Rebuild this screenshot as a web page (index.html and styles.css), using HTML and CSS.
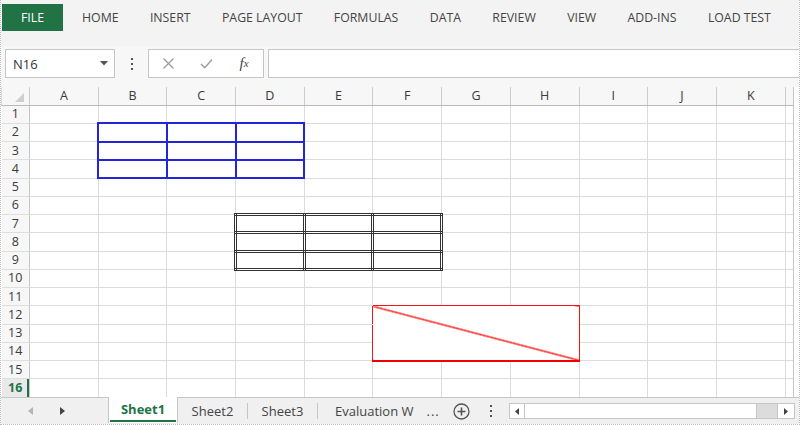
FILE: index.html
```html
<!DOCTYPE html>
<html>
<head>
<meta charset="utf-8">
<link rel="stylesheet" href="styles.css">
</head>
<body>
<div class="app">
  <div class="ribbon">
    <div class="tabs">
      <span class="file">FILE</span>
      <span class="tab">HOME</span>
      <span class="tab">INSERT</span>
      <span class="tab">PAGE LAYOUT</span>
      <span class="tab">FORMULAS</span>
      <span class="tab">DATA</span>
      <span class="tab">REVIEW</span>
      <span class="tab">VIEW</span>
      <span class="tab">ADD-INS</span>
      <span class="tab">LOAD TEST</span>
    </div>
  </div>
  <div class="fbar">
    <div class="namebox">
      <span class="ref">N16</span>
      <svg class="caret" width="8" height="5" viewBox="0 0 8 5"><path d="M0 0H8L4 4.5Z" fill="#555"/></svg>
    </div>
    <div class="vdots"><i></i><i></i><i></i></div>
    <div class="btns">
      <span class="btn"><svg width="11" height="11" viewBox="0 0 11 11"><path d="M0.5 0.5L10.5 10.5M10.5 0.5L0.5 10.5" stroke="#9a9a9a" stroke-width="1.2" fill="none"/></svg></span>
      <span class="btn"><svg width="13" height="11" viewBox="0 0 13 11"><path d="M1 6L4.8 9.8L12 1.5" stroke="#9a9a9a" stroke-width="1.4" fill="none"/></svg></span>
      <span class="btn fx">f<span class="fxs">x</span></span>
    </div>
    <div class="finput"></div>
  </div>
  <div class="sheetwrap">
    <table class="sheet">
      <colgroup>
        <col class="c0"><col class="cc"><col class="cc"><col class="cc"><col class="cc"><col class="cc"><col class="cc"><col class="cc"><col class="cc"><col class="cc"><col class="cc"><col class="cc"><col class="ce">
      </colgroup>
      <thead>
        <tr><th class="corner"><svg class="tri" width="9" height="9" viewBox="0 0 9 9"><path d="M9 0V9H0Z" fill="#cfcfcf"/></svg></th><th>A</th><th>B</th><th>C</th><th>D</th><th>E</th><th>F</th><th>G</th><th>H</th><th>I</th><th>J</th><th>K</th><th></th></tr>
      </thead>
      <tbody>
        <tr><th>1</th><td></td><td></td><td></td><td></td><td></td><td></td><td></td><td></td><td></td><td></td><td></td><td></td></tr>
        <tr><th>2</th><td></td><td class="b"></td><td class="b"></td><td class="b"></td><td></td><td></td><td></td><td></td><td></td><td></td><td></td><td></td></tr>
        <tr><th>3</th><td></td><td class="b"></td><td class="b"></td><td class="b"></td><td></td><td></td><td></td><td></td><td></td><td></td><td></td><td></td></tr>
        <tr><th>4</th><td></td><td class="b"></td><td class="b"></td><td class="b"></td><td></td><td></td><td></td><td></td><td></td><td></td><td></td><td></td></tr>
        <tr><th>5</th><td></td><td></td><td></td><td></td><td></td><td></td><td></td><td></td><td></td><td></td><td></td><td></td></tr>
        <tr><th>6</th><td></td><td></td><td></td><td></td><td></td><td></td><td></td><td></td><td></td><td></td><td></td><td></td></tr>
        <tr><th>7</th><td></td><td></td><td></td><td class="k"></td><td class="k"></td><td class="k"></td><td></td><td></td><td></td><td></td><td></td><td></td></tr>
        <tr><th>8</th><td></td><td></td><td></td><td class="k"></td><td class="k"></td><td class="k"></td><td></td><td></td><td></td><td></td><td></td><td></td></tr>
        <tr><th>9</th><td></td><td></td><td></td><td class="k"></td><td class="k"></td><td class="k"></td><td></td><td></td><td></td><td></td><td></td><td></td></tr>
        <tr><th>10</th><td></td><td></td><td></td><td></td><td></td><td></td><td></td><td></td><td></td><td></td><td></td><td></td></tr>
        <tr><th>11</th><td></td><td></td><td></td><td></td><td></td><td class="rt"></td><td class="rt"></td><td class="rt"></td><td></td><td></td><td></td><td></td></tr>
        <tr><th>12</th><td></td><td></td><td></td><td></td><td class="rl"></td><td class="r" colspan="3" rowspan="3"></td><td></td><td></td><td></td><td></td></tr>
        <tr><th>13</th><td></td><td></td><td></td><td></td><td class="rl"></td><td></td><td></td><td></td><td></td></tr>
        <tr><th>14</th><td></td><td></td><td></td><td></td><td class="rl"></td><td></td><td></td><td></td><td></td></tr>
        <tr><th>15</th><td></td><td></td><td></td><td></td><td></td><td></td><td></td><td></td><td></td><td></td><td></td><td></td></tr>
        <tr><th class="sel">16</th><td></td><td></td><td></td><td></td><td></td><td></td><td></td><td></td><td></td><td></td><td></td><td></td></tr>
      </tbody>
    </table>
  </div>
  <div class="tabbar">
    <div class="nav">
      <svg width="5" height="8" viewBox="0 0 5 8"><path d="M5 0V8L0 4Z" fill="#b5b5b5"/></svg>
      <svg width="5" height="8" viewBox="0 0 5 8"><path d="M0 0V8L5 4Z" fill="#444"/></svg>
    </div>
    <div class="sheet1"><span class="lbl">Sheet1</span><span class="ul"></span></div>
    <div class="stab">Sheet2</div>
    <span class="sep"></span>
    <div class="stab">Sheet3</div>
    <span class="sep"></span>
    <div class="stab eval">Evaluation W<span class="dots">...</span></div>
    <div class="add"><svg width="17" height="17" viewBox="0 0 17 17"><circle cx="8.5" cy="8.5" r="7.5" fill="none" stroke="#555" stroke-width="1.3"/><path d="M8.5 4.5V12.5M4.5 8.5H12.5" stroke="#555" stroke-width="1.6"/></svg></div>
    <div class="vd2"><i></i><i></i><i></i></div>
    <div class="hscroll">
      <span class="sbtn"><svg width="4" height="7" viewBox="0 0 4 7"><path d="M4 0V7L0 3.5Z" fill="#444"/></svg></span>
      <span class="thumb"></span>
      <span class="track"></span>
      <span class="sbtn last"><svg width="4" height="7" viewBox="0 0 4 7"><path d="M0 0V7L4 3.5Z" fill="#444"/></svg></span>
    </div>
  </div>
</div>
</body>
</html>
```
FILE: styles.css
```css
* { box-sizing: border-box; }
html, body { margin: 0; padding: 0; background: #fff; }
body { font-family: "Open Sans", "Liberation Sans", sans-serif; }

.app {
  width: 800px;
  height: 425px;
  overflow: hidden;
  border-left: 1px dotted #bcbcbc;
  border-right: 1px dotted #bcbcbc;
  border-bottom: 1px dotted #bcbcbc;
  display: flex;
  flex-direction: column;
  background: #fff;
}

/* Ribbon */
.ribbon {
  height: 46px;
  flex: none;
  background: #f3f3f3;
  padding-top: 4px;
}
.tabs {
  display: flex;
  align-items: center;
  height: 27px;
  gap: 31.4px;
  font-size: 12.3px;
  color: #444;
  white-space: nowrap;
}
.file {
  width: 61px;
  height: 27px;
  margin-left: 1px;
  margin-right: -12.4px;
  background: #217346;
  color: #fff;
  display: flex;
  align-items: center;
  justify-content: center;
}

/* Formula bar */
.fbar {
  height: 41px;
  flex: none;
  background: #f7f7f7;
  display: flex;
  align-items: flex-start;
  padding-top: 3px;
}
.namebox {
  margin-left: 4px;
  width: 110px;
  height: 29px;
  border: 1px solid #c6c6c6;
  background: #fff;
  display: flex;
  align-items: center;
  justify-content: space-between;
  padding: 0 6px 0 7px;
}
.ref { font-size: 13px; color: #333; }
.caret { display: block; }
.vdots {
  width: 33px;
  height: 29px;
  display: flex;
  flex-direction: column;
  align-items: center;
  justify-content: center;
  gap: 3px;
}
.vdots i, .vd2 i {
  display: block;
  width: 2px;
  height: 2px;
  background: #555;
}
.btns {
  width: 116px;
  height: 29px;
  border: 1px solid #c6c6c6;
  background: #fff;
  display: flex;
  align-items: center;
}
.btn {
  width: 38px;
  display: flex;
  align-items: center;
  justify-content: center;
}
.fx {
  font-family: "Liberation Serif", serif;
  font-style: italic;
  font-size: 15px;
  color: #444;
  line-height: 1;
}
.fxs { font-size: 11px; }
.finput {
  flex: 1;
  height: 29px;
  margin-left: 4px;
  border: 1px solid #c6c6c6;
  border-right: none;
  background: #fff;
}

/* Sheet grid */
.sheetwrap {
  height: 310px;
  flex: none;
  overflow: hidden;
  margin-right: 5px;
  border-right: 1px solid #c6c6c6;
}
.sheet {
  border-collapse: collapse;
  table-layout: fixed;
  width: 792px;
}
.c0 { width: 28px; }
.cc { width: 68.7px; }
.ce { width: 8.3px; }
.sheet th, .sheet td {
  padding: 0;
  border: 1px solid #dcdcdc;
}
.sheet thead th {
  height: 18px;
  background: #f7f7f7;
  border-top: none;
  border-right: 1px solid #cdcdcd;
  border-bottom: 1px solid #b9b9b9;
  font-weight: normal;
  font-size: 12.5px;
  color: #3a3a3a;
  line-height: 17px;
  text-align: center;
}
.sheet thead th:last-child { border-right: none; }
.sheet .corner {
  text-align: right;
  vertical-align: bottom;
  padding: 0 5px 3px 0;
  line-height: 0;
}
.tri { display: inline-block; }
.sheet tbody tr { height: 18.25px; }
.sheet tbody th {
  background: #f7f7f7;
  border-left: none;
  border-right: 1px solid #c6c6c6;
  border-bottom: 1px solid #dedede;
  font-weight: normal;
  font-size: 12.5px;
  color: #3a3a3a;
  line-height: 16px;
  text-align: center;
}
.sheet tbody th.sel {
  color: #217346;
  font-weight: bold;
  background: #e9e9e9;
  box-shadow: inset -2px 0 0 #217346;
}
.sheet td:last-child { border-right: none; }
.sheet td.b { border: 2px solid #2424d9; }
.sheet td.k { border: 3px double #333; }
.sheet td.rt { border-bottom-color: #f31616; }
.sheet td.rl { border-right-color: #f31616; }
.sheet td.r {
  border: 1px solid #f31616;
  border-bottom: 2px solid #ee0000;
  background: linear-gradient(to top right, rgba(255,0,0,0) calc(50% - 1px), #f00 calc(50% - 0.3px), #f00 calc(50% + 0.3px), rgba(255,0,0,0) calc(50% + 1px));
}

/* Sheet tabs */
.tabbar {
  flex: 1;
  background: #f0f0f0;
  border-top: 1px solid #c6c6c6;
  display: flex;
  align-items: center;
  font-size: 13px;
  color: #444;
  white-space: nowrap;
}
.nav {
  width: 107px;
  display: flex;
  align-items: center;
  padding-left: 27px;
  gap: 27px;
}
.nav svg { display: block; }
.sheet1 {
  width: 70px;
  align-self: stretch;
  margin-top: -1px;
  margin-bottom: 1px;
  background: #fff;
  border-left: 1px solid #c6c6c6;
  border-right: 1px solid #c6c6c6;
  display: flex;
  flex-direction: column;
}
.sheet1 .lbl {
  flex: 1;
  display: flex;
  align-items: center;
  justify-content: center;
  color: #217346;
  font-weight: bold;
  padding-top: 1px;
}
.sheet1 .ul {
  height: 2px;
  background: #217346;
  margin: 0 1px 1px 1px;
}
.stab {
  width: 69px;
  text-align: center;
}
.sep {
  width: 1px;
  height: 16px;
  background: #c6c6c6;
}
.stab.eval {
  width: 131px;
  text-align: left;
  padding-left: 17px;
}
.dots { margin-left: 13px; letter-spacing: 1px; }
.add {
  width: 24px;
  display: flex;
  justify-content: center;
}
.add svg { display: block; }
.vd2 {
  width: 36px;
  display: flex;
  flex-direction: column;
  align-items: center;
  gap: 3px;
}
.hscroll {
  display: flex;
  height: 16px;
}
.sbtn {
  width: 16px;
  height: 16px;
  border: 1px solid #c6c6c6;
  background: #fff;
  display: flex;
  align-items: center;
  justify-content: center;
}
.sbtn.last { width: 18px; }
.thumb {
  width: 232px;
  height: 16px;
  border-top: 1px solid #c6c6c6;
  border-bottom: 1px solid #c6c6c6;
  border-right: 1px solid #c6c6c6;
  background: #fff;
}
.track {
  width: 20px;
  height: 16px;
  background: #dcdcdc;
  border-top: 1px solid #c6c6c6;
  border-bottom: 1px solid #c6c6c6;
}
```
